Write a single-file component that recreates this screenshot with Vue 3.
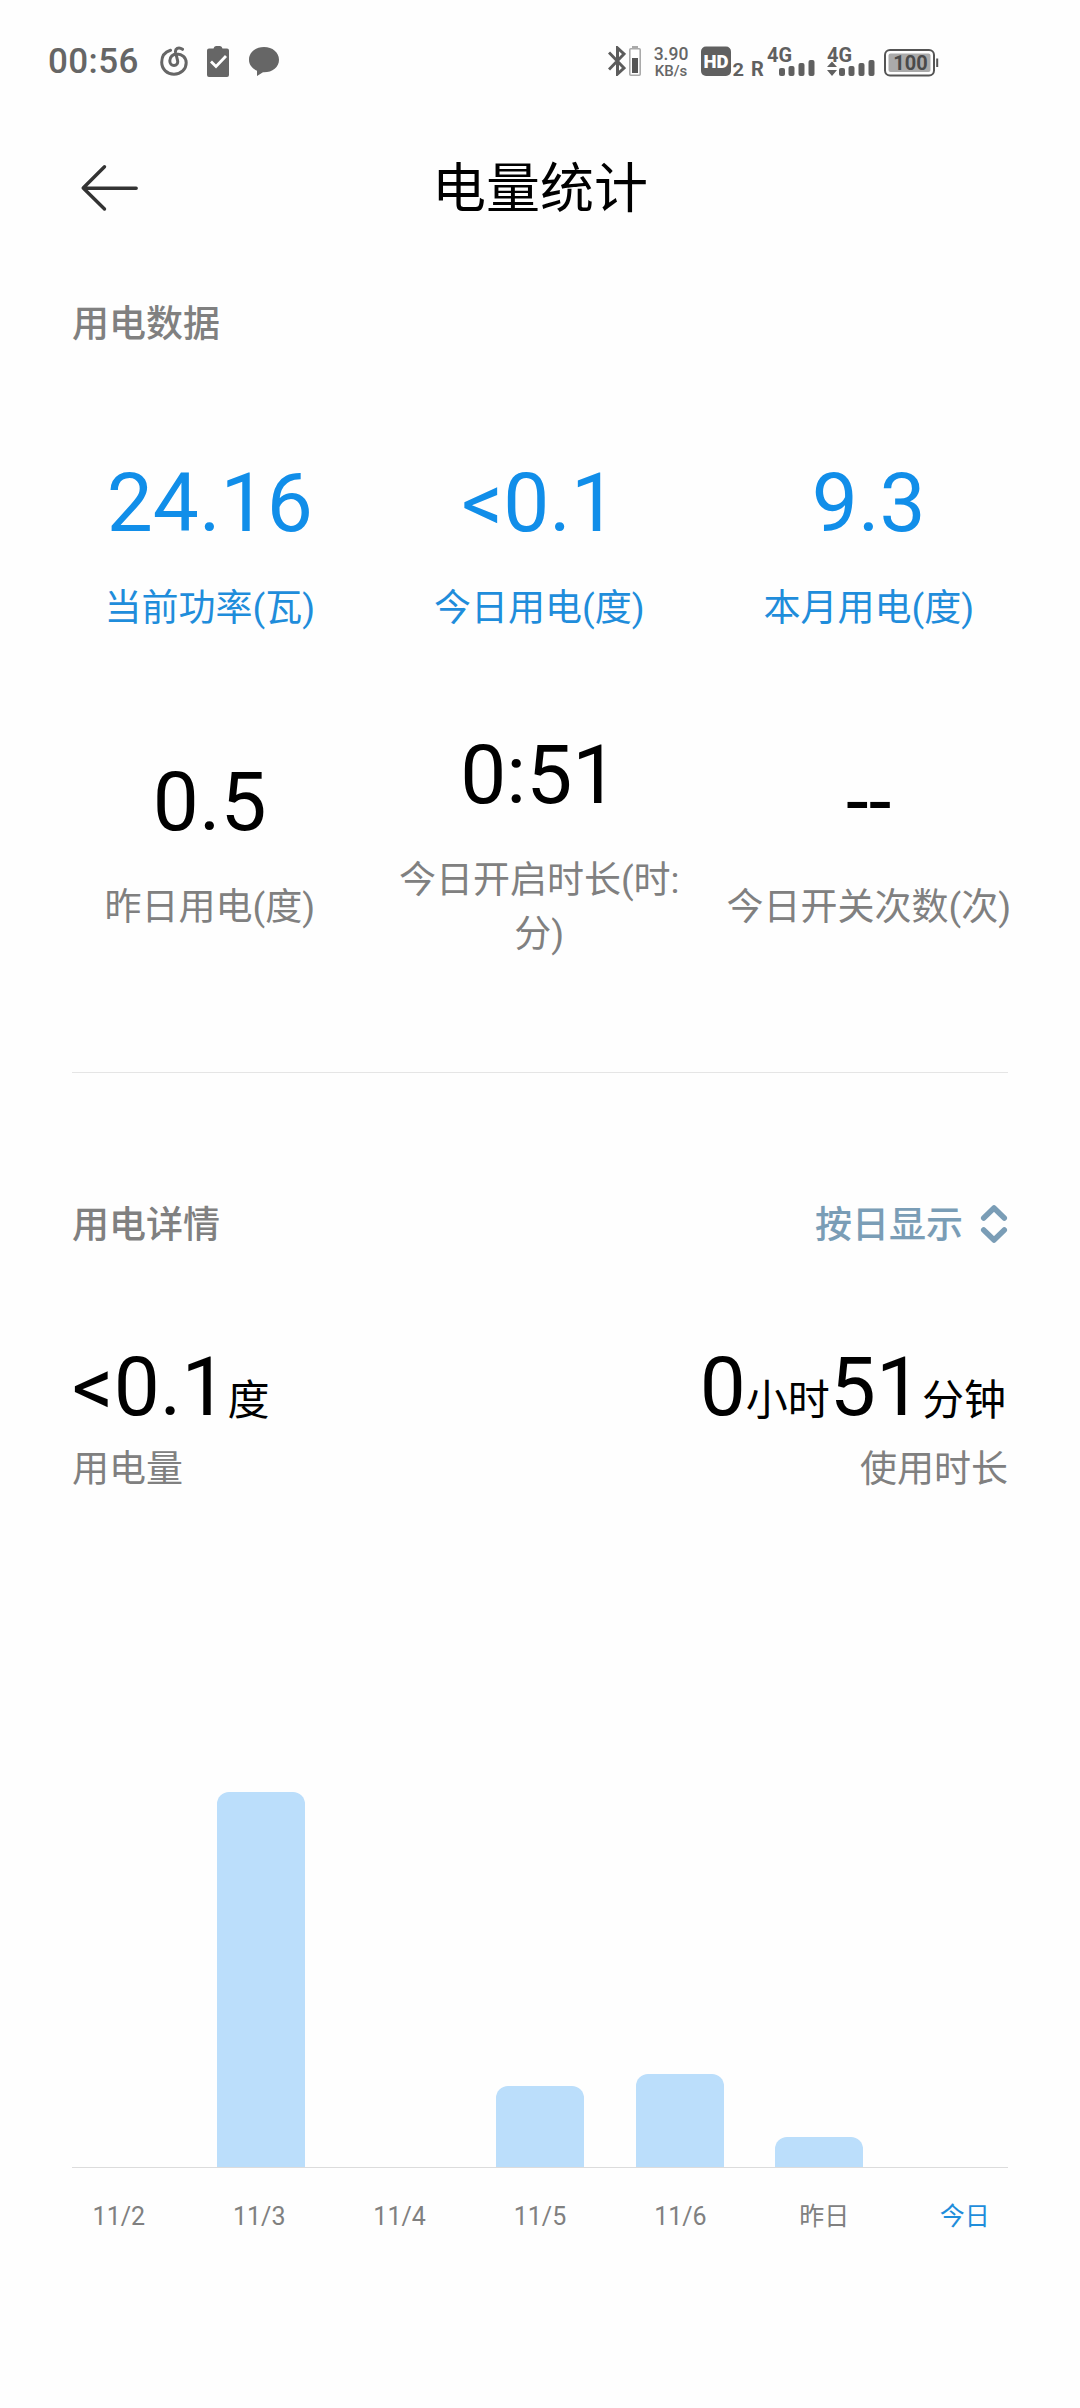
<template>
  <div class="page">
    <!-- Status bar -->
    <div class="status-bar">
      <span class="clock">00:56</span>
      <svg class="icon-music" width="28" height="30" viewBox="0 0 28 30">
        <path
          d="M10.500 4.300 C4.800 6 1.700 10.800 1.700 16.300 C1.700 23.200 7.200 28.200 14 28.200 C21 28.200 26.200 23.300 26.200 16.800 C26.200 11.500 22 7.900 17 7.900 C12.800 7.900 9.800 11 9.800 14.800 C9.800 17.700 11.700 19.500 14 19.500 C16.500 19.500 18.200 17.500 17.600 14.700 L15.600 6.500 C14.800 2.700 18.500 0.300 22.500 3.300"
          fill="none" stroke="#666" stroke-width="3" stroke-linecap="round"
        />
      </svg>
      <svg class="icon-task" width="22" height="31" viewBox="0 0 22 31">
        <path d="M2 2.500 H6.500 Q7 0 9 0 H13 Q15 0 15.500 2.500 H20 Q22 2.500 22 4.500 V29 Q22 31 20 31 H2 Q0 31 0 29 V4.500 Q0 2.500 2 2.500 Z" fill="#666" />
        <path d="M4 15.500 L9 20.500 L19 10" fill="none" stroke="#fff" stroke-width="2.800" />
      </svg>
      <svg class="icon-chat" width="30" height="29" viewBox="0 0 30 29">
        <path d="M15 0 C23.500 0 30 5.500 30 12.700 C30 20 23.500 25.300 15 25.300 H14 L8 29 V23.700 C3 21.500 0 17.500 0 12.700 C0 5.500 6.500 0 15 0 Z" fill="#666" />
      </svg>

      <div class="status-spacer"></div>

      <svg class="icon-bt" width="18" height="30" viewBox="0 0 18 30">
        <path d="M1 6.500 L16 22 L9.500 28 V2 L16 8 L1 23.500" fill="none" stroke="#5c5c5c" stroke-width="3" />
      </svg>
      <svg class="icon-bt-battery" width="12" height="30" viewBox="0 0 12 30">
        <rect x="3" y="0" width="6" height="3" fill="#aaa" />
        <rect x="0.800" y="2.800" width="10.400" height="26.400" rx="1" fill="none" stroke="#aaa" stroke-width="1.600" />
        <rect x="3" y="12" width="6" height="15" fill="#555" />
      </svg>
      <div class="net-speed">
        <span class="speed-value">3.90</span>
        <span class="speed-unit">KB/s</span>
      </div>
      <svg class="icon-hd" width="45" height="43" viewBox="0 -6 45 43">
        <rect x="0" y="0.500" width="30" height="29.500" rx="5" fill="#606060" />
        <text x="15" y="22" text-anchor="middle" class="hd-text" textLength="25" lengthAdjust="spacingAndGlyphs">HD</text>
        <text x="31.500" y="30" class="sim-text" textLength="11.500" lengthAdjust="spacingAndGlyphs">2</text>
      </svg>
      <svg class="icon-sim1" width="65" height="43" viewBox="-2 -6 65 43">
        <text x="-1" y="30" class="roam-text">R</text>
        <text x="15" y="15.500" class="gen-text" textLength="25" lengthAdjust="spacingAndGlyphs">4G</text>
        <rect v-for="bar in signalBars" :key="bar.x" :x="bar.x + 27" :y="30 - bar.h" width="6" :height="bar.h" rx="2" fill="#606060" />
      </svg>
      <svg class="icon-sim2" width="50" height="43" viewBox="-2 -6 50 43">
        <text x="0" y="15.500" class="gen-text" textLength="25" lengthAdjust="spacingAndGlyphs">4G</text>
        <path d="M5 15.500 L10 21 H0 Z M5 30 L0 24 H10 Z" fill="#606060" />
        <rect v-for="bar in signalBars" :key="bar.x" :x="bar.x + 12" :y="30 - bar.h" width="6" :height="bar.h" rx="2" fill="#606060" />
      </svg>
      <svg class="icon-battery" width="55" height="28" viewBox="0 0 55 28">
        <rect x="1" y="1" width="49" height="25.500" rx="5" fill="none" stroke="#555" stroke-width="2" />
        <rect x="4.500" y="4.500" width="42" height="18.500" rx="2" fill="#aaa" />
        <rect x="52.200" y="9.500" width="2" height="8.500" fill="#555" />
        <text x="26.500" y="20.700" text-anchor="middle" class="battery-text">100</text>
      </svg>
    </div>

    <!-- Title bar -->
    <div class="title-bar">
      <svg class="back" width="62" height="48" viewBox="0 0 62 48">
        <path d="M26.500 2.700 L5.200 24 L26.500 45 M5.200 24 L58.200 24.300" fill="none" stroke="#333" stroke-width="3.400" stroke-linecap="round" stroke-linejoin="round" />
      </svg>
      <h1>电量统计</h1>
    </div>

    <!-- Usage data -->
    <h2 class="section-title">用电数据</h2>
    <div class="stats">
      <div v-for="item in stats" :key="item.label" class="stat" :class="{ active: item.active }">
        <div class="stat-value">{{ item.value }}</div>
        <div class="stat-label">{{ item.label }}</div>
      </div>
    </div>

    <div class="divider"></div>

    <!-- Usage details -->
    <div class="detail-header">
      <h2>用电详情</h2>
      <div class="mode">
        <span>按日显示</span>
        <svg width="28" height="40" viewBox="0 0 28 40">
          <path d="M3.700 14 L14 4 L24.300 14 M3.700 26 L14 36 L24.300 26" fill="none" stroke="#7a9db6" stroke-width="5.500" stroke-linecap="round" stroke-linejoin="round" />
        </svg>
      </div>
    </div>

    <div class="summary">
      <div class="summary-item">
        <div class="summary-value">&lt;0.1<small>度</small></div>
        <div class="summary-label">用电量</div>
      </div>
      <div class="summary-item right">
        <div class="summary-value">0<small>小时</small>51<small>分钟</small></div>
        <div class="summary-label">使用时长</div>
      </div>
    </div>

    <!-- Daily chart -->
    <div class="chart">
      <div class="bars">
        <div v-for="day in days" :key="day.label" class="bar-slot">
          <div class="bar" :style="{ height: day.height + 'px' }"></div>
        </div>
      </div>
      <div class="axis"></div>
      <div class="labels">
        <span v-for="day in days" :key="day.label" :class="{ today: day.today, cjk: day.cjk }">{{ day.label }}</span>
      </div>
    </div>
  </div>
</template>

<script setup>
import { ref } from 'vue'

const signalBars = [
  { x: 0, h: 8 },
  { x: 9.5, h: 10 },
  { x: 19.5, h: 13 },
  { x: 29.5, h: 16 }
]

const stats = ref([
  { value: '24.16', label: '当前功率(瓦)', active: true },
  { value: '<0.1', label: '今日用电(度)', active: true },
  { value: '9.3', label: '本月用电(度)', active: true },
  { value: '0.5', label: '昨日用电(度)' },
  { value: '0:51', label: '今日开启时长(时:分)' },
  { value: '--', label: '今日开关次数(次)' }
])

const days = ref([
  { label: '11/2', height: 0 },
  { label: '11/3', height: 375 },
  { label: '11/4', height: 0 },
  { label: '11/5', height: 81 },
  { label: '11/6', height: 93 },
  { label: '昨日', height: 30, cjk: true },
  { label: '今日', height: 0, cjk: true, today: true }
])
</script>

<style>
body {
  margin: 0;
  background: #fefefe;
}
</style>

<style scoped>
.page {
  width: 1080px;
  height: 2408px;
  overflow: hidden;
  background: #fefefe;
  color: #000;
  font-family: Roboto, "Noto Sans CJK SC", sans-serif;
}

h1,
h2 {
  margin: 0;
}

/* Status bar */
.status-bar {
  box-sizing: border-box;
  height: 122px;
  padding: 0 141px 0 48px;
  display: flex;
  align-items: center;
  color: #666;
}

.clock {
  width: 89px;
  padding-top: 1px;
  font-size: 35px;
  font-weight: 500;
  line-height: 40px;
  letter-spacing: 0.4px;
}

.icon-music {
  margin-left: 23px;
}

.icon-task {
  margin-left: 19px;
}

.icon-chat {
  margin-left: 20px;
}

.status-spacer {
  flex: 1;
}

.icon-bt-battery {
  margin-left: 3px;
}

.net-speed {
  width: 36px;
  margin-left: 12px;
  padding-top: 2px;
  display: flex;
  flex-direction: column;
  align-items: center;
  font-weight: 500;
}

.speed-value {
  font-size: 17.5px;
  line-height: 17px;
}

.speed-unit {
  font-size: 15px;
  line-height: 16px;
}

.icon-hd {
  margin-left: 12px;
}

.hd-text {
  font-size: 19px;
  font-weight: 900;
  fill: #fff;
}

.sim-text {
  font-size: 18px;
  font-weight: 700;
  fill: #606060;
}

.icon-sim1 {
  margin-left: 4px;
}

.roam-text {
  font-size: 20px;
  font-weight: 700;
  fill: #606060;
}

.gen-text {
  font-size: 21px;
  font-weight: 700;
  fill: #606060;
}

.icon-sim2 {
  margin-left: 10px;
}

.icon-battery {
  margin-left: 9px;
  margin-top: 3px;
}

.battery-text {
  font-size: 20px;
  font-weight: 700;
  fill: #4a4a4a;
}

/* Title bar */
.title-bar {
  height: 132px;
  padding: 0 78px;
  display: grid;
  grid-template-columns: 62px 1fr 62px;
  align-items: center;
}

.title-bar h1 {
  padding-top: 4px;
  font-size: 54px;
  font-weight: 400;
  line-height: 80px;
  text-align: center;
}

.section-title {
  margin: 44px 72px 0;
  color: #808080;
  font-size: 37px;
  font-weight: 500;
  line-height: 54px;
}

/* Stats grid */
.stats {
  margin: 43px 45px 0;
  display: grid;
  grid-template-columns: repeat(3, 329.5px);
  grid-template-rows: 300px 298px;
  align-items: center;
}

.stat {
  text-align: center;
}

.stat-value {
  font-size: 82px;
  line-height: 96px;
}

.stat-label {
  margin-top: 31px;
  color: #808080;
  font-size: 37px;
  line-height: 54px;
}

.stat.active .stat-value {
  color: #118ee9;
}

.stat.active .stat-label {
  color: #1f8ddb;
}

.divider {
  height: 1px;
  margin: 79px 72px 0;
  background: #e5e5e5;
}

/* Detail header */
.detail-header {
  margin: 126px 72px 0;
  height: 54px;
  display: flex;
  justify-content: space-between;
  align-items: center;
  color: #808080;
}

.detail-header h2,
.mode {
  font-size: 37px;
  font-weight: 500;
  line-height: 54px;
}

.mode {
  display: flex;
  align-items: center;
  gap: 17px;
  color: #7a9db6;
}

.mode svg {
  margin-top: -4px;
}

.summary {
  margin: 84px 72px 0;
  display: flex;
  justify-content: space-between;
}

.summary-item.right {
  text-align: right;
}

.summary-value {
  height: 106px;
  font-size: 82px;
  line-height: 100px;
  white-space: nowrap;
}

.summary-item.right .summary-value {
  padding-right: 2px;
}

.summary-value small {
  font-size: 42px;
  line-height: 1;
}

.summary-label {
  color: #808080;
  font-size: 37px;
  line-height: 54px;
}

/* Chart */
.chart {
  margin-top: 270px;
}

.bars {
  height: 400px;
  display: grid;
  grid-template-columns: repeat(7, 139.5px);
  justify-content: center;
  align-items: end;
}

.bar {
  width: 88px;
  margin: 0 auto;
  border-radius: 12px 12px 0 0;
  background: #bbdefb;
}

.axis {
  height: 1px;
  margin: 0 72px;
  background: #dcdcdc;
}

.labels {
  margin-top: 29px;
  display: grid;
  grid-template-columns: repeat(7, 140.4px);
  justify-content: center;
  color: #808080;
  font-size: 25px;
  line-height: 40px;
  text-align: center;
}

.labels .cjk {
  padding-left: 7px;
}

.labels .today {
  color: #1f8ddb;
}
</style>
